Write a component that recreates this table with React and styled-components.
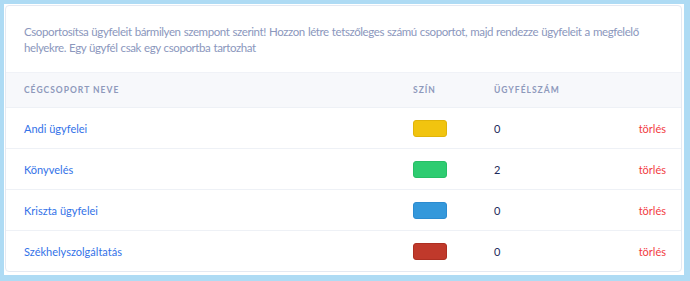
import React from "react";
import styled, { createGlobalStyle } from "styled-components";

const Global = createGlobalStyle`
  html, body { margin: 0; padding: 0; background: #ffffff; }
  body { font-family: "Lato", "Open Sans", sans-serif; }
  * { box-sizing: border-box; }
`;

const Frame = styled.div`
  width: 690px;
  height: 281px;
  background: #aedbf4;
  padding: 4px 6px 6px 4px;
`;

const Sheet = styled.div`
  height: 100%;
  background: #ffffff;
  padding: 1px 2px 3px 1px;
`;

const Card = styled.div`
  height: 100%;
  background: #ffffff;
  border: 1px solid #e4e9f2;
  border-radius: 4px;
  overflow: hidden;
  display: flex;
  flex-direction: column;
`;

const Intro = styled.p`
  margin: 0;
  padding: 18px 30px 16px 18px;
  font-size: 11.5px;
  letter-spacing: -0.4px;
  word-spacing: 0.5px;
  line-height: 16px;
  color: #8b97bd;
`;

const Table = styled.div`
  display: flex;
  flex-direction: column;
`;

const Grid = styled.div`
  display: grid;
  grid-template-columns: 389px 81px 1fr auto;
  align-items: center;
  padding: 0 15px 0 18px;
`;

const HeadRow = styled(Grid)`
  height: 36px;
  background: #f7f8fb;
  border-top: 1px solid #f0f2f7;
  border-bottom: 1px solid #eef1f6;
`;

const HeadCell = styled.div`
  font-size: 8.5px;
  font-weight: 700;
  letter-spacing: 1px;
  text-transform: uppercase;
  color: #8e99bb;
`;

const Row = styled(Grid)`
  height: 41px;
  border-bottom: ${(p) => (p.$last ? "none" : "1px solid #eef1f6")};
`;

const Name = styled.a`
  font-size: 11px;
  color: #3372e8;
  text-decoration: none;
`;

const Swatch = styled.span`
  display: block;
  width: 34px;
  height: 17px;
  border-radius: 3px;
  background: ${(p) => p.$color};
  border: 1px solid ${(p) => p.$edge};
`;

const Count = styled.span`
  font-size: 11px;
  color: #1d2a5a;
`;

const Delete = styled.a`
  font-size: 11px;
  color: #f23b3f;
  text-decoration: none;
`;

const groups = [
  { name: "Andi ügyfelei", color: "#f1c40f", edge: "#e0b40a", count: 0 },
  { name: "Könyvelés", color: "#2ecc71", edge: "#27be66", count: 2 },
  { name: "Kriszta ügyfelei", color: "#3498db", edge: "#2c8bd0", count: 0 },
  { name: "Székhelyszolgáltatás", color: "#c0392b", edge: "#ad2f22", count: 0 },
];

export default function App() {
  return (
    <>
      <Global />
      <Frame>
        <Sheet>
          <Card>
            <Intro>
              Csoportosítsa ügyfeleit bármilyen szempont szerint! Hozzon létre tetszőleges számú csoportot, majd rendezze ügyfeleit a megfelelő helyekre. Egy ügyfél csak egy csoportba tartozhat
            </Intro>
            <Table>
              <HeadRow>
                <HeadCell>Cégcsoport neve</HeadCell>
                <HeadCell>Szín</HeadCell>
                <HeadCell>Ügyfélszám</HeadCell>
                <HeadCell />
              </HeadRow>
              {groups.map((g, i) => (
                <Row key={g.name} $last={i === groups.length - 1}>
                  <Name href="#">{g.name}</Name>
                  <Swatch $color={g.color} $edge={g.edge} />
                  <Count>{g.count}</Count>
                  <Delete href="#">törlés</Delete>
                </Row>
              ))}
            </Table>
          </Card>
        </Sheet>
      </Frame>
    </>
  );
}
